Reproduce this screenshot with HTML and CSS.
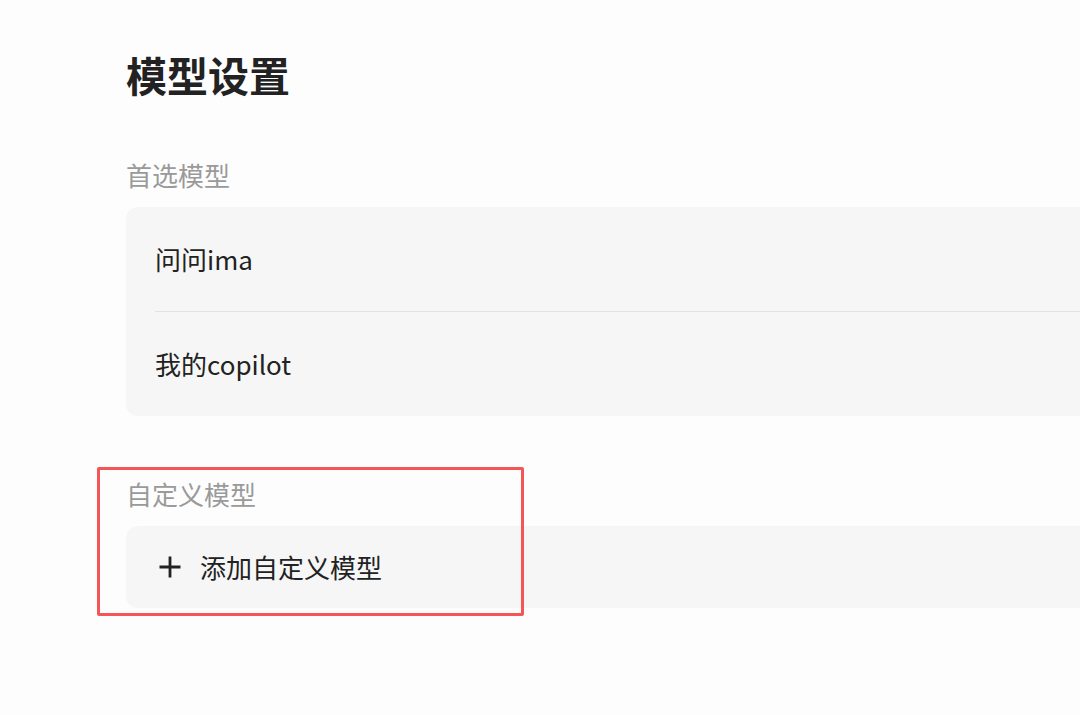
FILE: index.html
```html
<!DOCTYPE html>
<html lang="zh-CN">
<head>
    <meta charset="UTF-8">
    <meta name="viewport" content="width=device-width, initial-scale=1.0">
    <title>模型设置</title>
    <link rel="stylesheet" href="styles.css">
</head>
<body>

<div class="page">
    <h1 class="title">模型设置</h1>

    <!-- preferred models -->
    <section class="group">
        <div class="group-label">首选模型</div>
        <div class="card">
            <div class="row">问问ima</div>
            <div class="divider"></div>
            <div class="row">我的copilot</div>
        </div>
    </section>

    <!-- custom models -->
    <section class="group group-custom">
        <div class="group-label">自定义模型</div>
        <div class="card">
            <div class="row row-add">
                <svg class="plus" width="24" height="24" viewBox="0 0 24 24">
                    <path d="M12 1.5V22.5M1.5 12H22.5" stroke="#222" stroke-width="2.8" fill="none"/>
                </svg>
                <span>添加自定义模型</span>
            </div>
        </div>
        <div class="highlight"></div>
    </section>
</div>

</body>
</html>
```

FILE: styles.css
```css
html, body {
    margin: 0;
    padding: 0;
    background-color: #fdfdfd;
}
body {
    font-family: "Noto Sans CJK SC", "Noto Sans", sans-serif;
    color: #222;
    width: 1080px;
    height: 715px;
    overflow: hidden;
}
.page {
    padding: 46px 0 0 126px;
}
.title {
    margin: 0;
    font-size: 41px;
    line-height: 56px;
    font-weight: 700;
    color: #222;
}
.group {
    position: relative;
    margin-top: 55px;
}
.group-custom {
    margin-top: 60px;
}
.group-label {
    font-size: 26px;
    line-height: 36px;
    color: #9a9a9a;
    margin-bottom: 14px;
}
/* card runs off the right edge of the window */
.card {
    background-color: #f6f6f6;
    border-radius: 12px 0 0 12px;
    padding-left: 29px;
}
.row {
    height: 104px;
    display: flex;
    align-items: center;
    font-size: 26px;
    line-height: 36px;
}
.divider {
    height: 1px;
    background-color: #e2e2e2;
}
.row-add {
    height: 82px;
    gap: 18px;
}
.plus {
    margin-left: 3px;
    display: block;
}
.highlight {
    position: absolute;
    left: -29px;
    top: -9px;
    width: 421px;
    height: 143px;
    border: 3px solid #f45657;
    border-radius: 2px;
}
```
